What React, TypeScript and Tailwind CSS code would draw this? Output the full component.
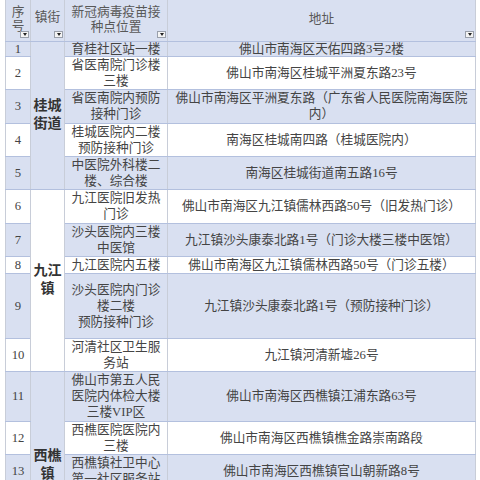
import React from "react";

type Row = {
  n: number;
  loc: string[];
  addr: string[];
  h: number;
};

const rows: Row[] = [
  { n: 1, loc: ["育桂社区站一楼"], addr: ["佛山市南海区天佑四路3号2楼"], h: 15 },
  { n: 2, loc: ["省医南院门诊楼", "三楼"], addr: ["佛山市南海区桂城平洲夏东路23号"], h: 33 },
  { n: 3, loc: ["省医南院内预防", "接种门诊"], addr: ["佛山市南海区平洲夏东路（广东省人民医院南海医院", "内）"], h: 34 },
  { n: 4, loc: ["桂城医院内二楼", "预防接种门诊"], addr: ["南海区桂城南四路（桂城医院内）"], h: 33 },
  { n: 5, loc: ["中医院外科楼二", "楼、综合楼"], addr: ["南海区桂城街道南五路16号"], h: 32 },
  { n: 6, loc: ["九江医院旧发热", "门诊"], addr: ["佛山市南海区九江镇儒林西路50号（旧发热门诊）"], h: 34 },
  { n: 7, loc: ["沙头医院内三楼", "中医馆"], addr: ["九江镇沙头康泰北路1号（门诊大楼三楼中医馆）"], h: 33 },
  { n: 8, loc: ["九江医院内五楼"], addr: ["佛山市南海区九江镇儒林西路50号（门诊五楼）"], h: 17 },
  { n: 9, loc: ["沙头医院内门诊", "楼二楼", "预防接种门诊"], addr: ["九江镇沙头康泰北路1号（预防接种门诊）"], h: 65 },
  { n: 10, loc: ["河清社区卫生服", "务站"], addr: ["九江镇河清新墟26号"], h: 33 },
  { n: 11, loc: ["佛山市第五人民", "医院内体检大楼", "三楼VIP区"], addr: ["佛山市南海区西樵镇江浦东路63号"], h: 50 },
  { n: 12, loc: ["西樵医院医院内", "三楼"], addr: ["佛山市南海区西樵镇樵金路崇南路段"], h: 32 },
  { n: 13, loc: ["西樵镇社卫中心", "第一社区服务站"], addr: ["佛山市南海区西樵镇官山朝新路8号"], h: 33 },
];

const towns: Record<number, { name: string[]; span: number; blue: boolean; align: string }> = {
  1: { name: ["桂城", "街道"], span: 5, blue: true, align: "align-middle" },
  6: { name: ["九江", "镇"], span: 5, blue: false, align: "align-middle" },
  11: { name: ["西樵", "镇"], span: 3, blue: true, align: "align-bottom pb-[4px]" },
};

// cell borders: bluish rules between rows, lighter grey between columns
const cell = "border-x border-x-[#c8cdd8] border-b border-b-[#b3c0de] p-0 text-center";

const FilterBtn = () => (
  <span className="absolute right-[1px] bottom-[3px] flex h-[7px] w-[9px] items-center justify-center border border-[#9aa0ab] bg-[#f4f4f4]">
    <span className="block h-0 w-0 border-x-[2.5px] border-t-[3px] border-x-transparent border-t-[#222]" />
  </span>
);

const Lines = ({ lines }: { lines: string[] }) => (
  <>
    {lines.map((l, i) => (
      <div key={i}>{l}</div>
    ))}
  </>
);

export default function App() {
  return (
    <div className="h-[480px] w-[480px] overflow-hidden bg-white pl-[5px] font-[family-name:'Liberation_Serif','Noto_Sans_CJK_SC',serif] text-[12.7px] leading-[16px] text-[#444]">
      <table className="w-[470px] table-fixed border-collapse">
        <colgroup>
          <col className="w-[25px]" />
          <col className="w-[34px]" />
          <col className="w-[103px]" />
          <col className="w-[308px]" />
        </colgroup>
        <thead>
          <tr className="h-[41px] bg-[#d9e0f1] text-[#585858]">
            <th className={`relative ${cell} align-top font-normal leading-[14px]`}>
              <div className="pt-[5px]">序<br />号</div>
              <FilterBtn />
            </th>
            <th className={`relative ${cell} align-middle font-normal`}>
              <div className="pb-[6px]">镇街</div>
              <FilterBtn />
            </th>
            <th className={`relative ${cell} align-top font-normal leading-[15px]`}>
              <div className="pt-[5px]">新冠病毒疫苗接<br />种点位置</div>
              <FilterBtn />
            </th>
            <th className={`relative ${cell} align-middle font-normal`}>
              <div className="pb-[3px]">地址</div>
              <FilterBtn />
            </th>
          </tr>
        </thead>
        <tbody>
          {rows.map((r) => {
            const blue = r.n % 2 === 1;
            const bg = blue ? "bg-[#d9e0f1]" : "bg-white";
            const town = towns[r.n];
            const tight = r.h < 20 ? "leading-[14px]" : "";
            return (
              <tr key={r.n} style={{ height: r.h }} className={bg}>
                <td className={`${cell} align-middle ${tight}`}>{r.n}</td>
                {town && (
                  <td
                    rowSpan={town.span}
                    className={`${cell} text-[14px] leading-[18px] font-semibold text-[#333] ${town.align} ${
                      town.blue ? "bg-[#d9e0f1]" : "bg-white"
                    }`}
                  >
                    <Lines lines={town.name} />
                  </td>
                )}
                <td className={`${cell} align-middle ${tight}`}>
                  <Lines lines={r.loc} />
                </td>
                <td className={`${cell} align-middle ${tight}`}>
                  <Lines lines={r.addr} />
                </td>
              </tr>
            );
          })}
        </tbody>
      </table>
    </div>
  );
}
